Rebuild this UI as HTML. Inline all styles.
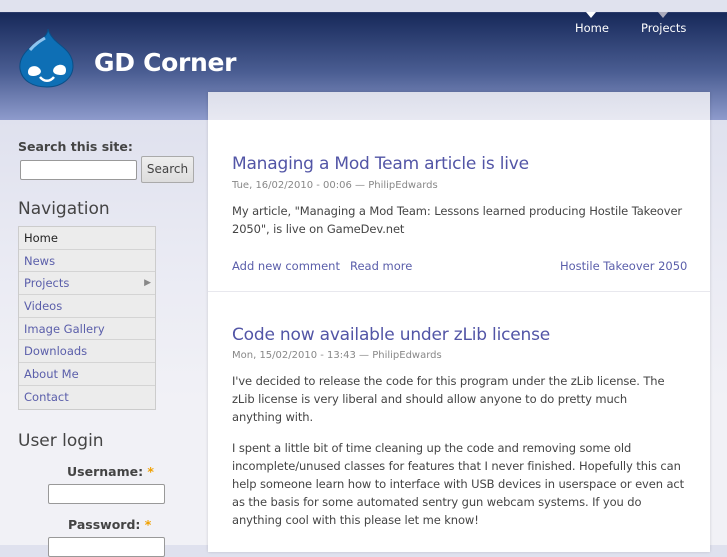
<!DOCTYPE html>
<html><head><style>
*{margin:0;padding:0;box-sizing:border-box}
body{width:727px;height:545px;overflow:hidden;font-family:"DejaVu Sans","Liberation Sans",sans-serif;background:linear-gradient(#dfe1ee 120px,#e9eaf3 250px,#f1f1f6 400px);position:relative;color:#444}
.top{position:absolute;left:0;top:0;width:727px;height:12px;background:#e0e2ee}
.hdr{position:absolute;left:0;top:12px;width:727px;height:108px;background:linear-gradient(#17295a,#4a5d92 55%,#8e9bcc);border-top:1px solid #2a3a6a}
.nav a{position:absolute;top:21px;color:#fff;font-size:11.5px;text-decoration:none}
.tri{position:absolute;top:12px;width:0;height:0;border-left:5px solid transparent;border-right:5px solid transparent;border-top:6px solid #fff}
.title{position:absolute;left:94px;top:48px;color:#fff;font-size:25px;font-weight:bold;letter-spacing:-0.3px}
.panel{position:absolute;left:208px;top:92px;width:502px;height:460px;background:#fff;box-shadow:0 0 3px rgba(0,0,0,.15)}
.panel .ph{height:28px;background:linear-gradient(#dcdeea,#e8e9f2)}
.sec1{background:#fff;height:172px;border-bottom:1px solid #e8e8ee;position:relative}
a{color:#5a5eaa;text-decoration:none}
h2{position:absolute;font-weight:normal;color:#5255a6;font-size:17px;letter-spacing:-0.2px}
.meta{position:absolute;font-size:10px;color:#888}
p.t{position:absolute;font-size:11.5px;line-height:18px;color:#444;letter-spacing:-0.1px}
.lk{position:absolute;font-size:11.5px}
.side{position:absolute;left:18px}
.lbl{font-size:12.5px;font-weight:bold;color:#444}
input{position:absolute;background:#fff;border:1px solid #999;border-radius:2px}
.btn{position:absolute;left:141px;top:156px;width:53px;height:27px;border:1px solid #aaa;border-radius:2px;background:linear-gradient(#eee,#ddd);font-size:12px;color:#444;text-align:center;line-height:25px}
h3{position:absolute;font-weight:normal;font-size:17px;color:#444}
ul{position:absolute;left:18px;top:226px;width:138px;border:1px solid #ccc;list-style:none;background:#ececec}
li{height:22.7px;border-bottom:1px solid #d4d4d4;font-size:11.5px;padding-left:5px;line-height:22px;color:#5a5eaa;position:relative}
li:last-child{border-bottom:none}
.star{color:#f0a000}
</style></head><body>
<div class="top"></div>
<div class="hdr"></div>
<svg style="position:absolute;left:18px;top:28px" width="58" height="60" viewBox="0 0 58 60">
<path d="M30 1 C30 8 22 12 14 18 C5 25 1 33 2 41 C4 53 15 59 29 59 C44 59 55 50 55 38 C55 26 46 20 40 15 C34 10 31 6 30 1Z" fill="#0e6fb5" stroke="#0a4f88" stroke-width="1"/>
<path d="M12 22 C17 16 22 13 27 10" stroke="#8fc4ee" stroke-width="3" fill="none"/>
<path d="M10 44 C10 38 18 36 22 41 C25 45 20 48 15 48 C11 48 10 46 10 44Z" fill="#fff"/>
<path d="M48 42 C48 36 40 35 36 40 C33 45 38 47 43 47 C47 47 48 45 48 42Z" fill="#fff"/>
<path d="M22 49 C26 54 32 54 36 49" stroke="#fff" stroke-width="2.5" fill="none"/>
</svg>
<div class="title">GD Corner</div>
<div class="nav"><span class="tri" style="left:586px"></span><a style="left:575px">Home</a><span class="tri" style="left:658px;border-top-color:#aab"></span><a style="left:641px">Projects</a></div>

<div class="panel"><div class="ph"></div>
<div class="sec1">
<h2 style="left:24px;top:34px">Managing a Mod Team article is live</h2>
<div class="meta" style="left:24px;top:60px">Tue, 16/02/2010 - 00:06 — PhilipEdwards</div>
<p class="t" style="left:24px;top:82px;width:470px">My article, "Managing a Mod Team: Lessons learned producing Hostile Takeover 2050", is live on GameDev.net</p>
<a class="lk" style="left:24px;top:139px">Add new comment</a><a class="lk" style="left:142px;top:139px">Read more</a><a class="lk" style="left:352px;top:139px">Hostile Takeover 2050</a>
</div>
<div style="position:relative">
<h2 style="left:24px;top:33px">Code now available under zLib license</h2>
<div class="meta" style="left:24px;top:58px">Mon, 15/02/2010 - 13:43 — PhilipEdwards</div>
<p class="t" style="left:24px;top:80px;width:445px">I've decided to release the code for this program under the zLib license. The zLib license is very liberal and should allow anyone to do pretty much anything with.</p>
<p class="t" style="left:24px;top:147px;width:462px">I spent a little bit of time cleaning up the code and removing some old incomplete/unused classes for features that I never finished. Hopefully this can help someone learn how to interface with USB devices in userspace or even act as the basis for some automated sentry gun webcam systems. If you do anything cool with this please let me know!</p>
</div>
</div>

<div class="side lbl" style="top:139px">Search this site:</div>
<input style="left:20px;top:160px;width:117px;height:20px">
<div class="btn">Search</div>
<h3 style="left:18px;top:199px">Navigation</h3>
<ul>
<li style="color:#222">Home</li><li>News</li><li>Projects<span style="position:absolute;right:4px;color:#888;font-size:9px">▶</span></li><li>Videos</li><li>Image Gallery</li><li>Downloads</li><li>About Me</li><li>Contact</li>
</ul>
<h3 style="left:18px;top:431px">User login</h3>
<div class="lbl" style="position:absolute;left:67px;top:464px">Username: <span class="star">*</span></div>
<input style="left:48px;top:484px;width:117px;height:20px">
<div class="lbl" style="position:absolute;left:68px;top:517px">Password: <span class="star">*</span></div>
<input style="left:48px;top:537px;width:117px;height:20px">
</body></html>
